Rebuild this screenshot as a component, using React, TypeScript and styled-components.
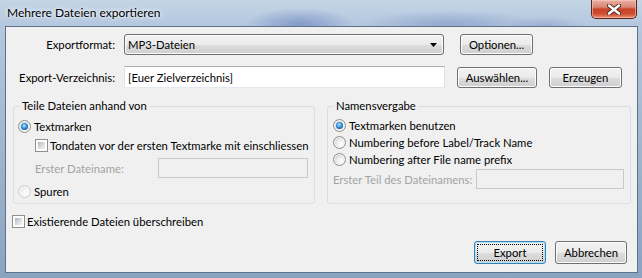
import React from 'react';
import styled, { createGlobalStyle } from 'styled-components';

const Global = createGlobalStyle`
  html, body { margin: 0; padding: 0; }
  body {
    width: 642px; height: 278px; overflow: hidden;
    font-family: Lato, "Noto Sans", sans-serif;
    font-size: 11.3px; color: #000;
  }
  * { box-sizing: border-box; }
`;

const Window = styled.div`
  width: 642px;
  height: 278px;
  display: flex;
  flex-direction: column;
  padding: 0 4px 5px 5px;
  background:
    radial-gradient(ellipse 55px 16px at 300px 24px, rgba(40, 70, 160, 0.35), transparent),
    radial-gradient(ellipse 90px 14px at 450px 24px, rgba(50, 80, 160, 0.25), transparent),
    radial-gradient(ellipse 40px 10px at 545px 26px, rgba(50, 80, 160, 0.2), transparent),
    linear-gradient(180deg, #c5d5e7 0px, #b3c7de 26px, #8aa3c1 100%);
`;

const TitleBar = styled.div`
  height: 26px;
  flex: none;
  display: flex;
  align-items: flex-start;
  justify-content: space-between;
`;

const Title = styled.div`
  margin: 5px 0 0 2px;
  font-size: 12px;
  line-height: 16px;
  color: #000;
  text-shadow: 0 0 6px rgba(255, 255, 255, 0.95), 0 0 3px rgba(255, 255, 255, 0.9);
`;

const CloseButton = styled.div`
  width: 46px;
  height: 19px;
  margin-right: 1px;
  border: 1px solid #5a2318;
  border-top: none;
  border-radius: 0 0 5px 5px;
  background: linear-gradient(180deg, #eab0a2 0%, #d98672 40%, #c7442a 50%, #cf4a2e 75%, #e58e6e 100%);
  box-shadow: inset 0 0 0 1px rgba(255, 210, 200, 0.55);
  display: flex;
  align-items: center;
  justify-content: center;
`;

const Client = styled.div`
  flex: 1;
  background: #f0f0f0;
  border: 1px solid #5e7189;
  display: flex;
  flex-direction: column;
  padding: 7px 6px 0 7px;
`;

const Row = styled.div<{ $top?: number }>`
  display: flex;
  align-items: center;
  margin-top: ${p => p.$top ?? 0}px;
`;

const FieldLabel = styled.label<{ $w: number; $left?: number; $right?: boolean; $disabled?: boolean }>`
  width: ${p => p.$w}px;
  flex: none;
  margin-left: ${p => p.$left ?? 0}px;
  text-align: ${p => (p.$right ? 'right' : 'left')};
  color: ${p => (p.$disabled ? '#a3a3a3' : '#000')};
  white-space: nowrap;
`;

const Select = styled.div`
  width: 320px;
  height: 21px;
  margin-left: 9px;
  border: 1px solid #707070;
  border-radius: 3px;
  background: linear-gradient(180deg, #f2f2f2 0%, #ebebeb 50%, #dddddd 51%, #cfcfcf 100%);
  box-shadow: inset 0 0 0 1px #fbfbfb;
  display: flex;
  align-items: center;
  justify-content: space-between;
  padding: 0 6px 0 3px;
`;

const TextBox = styled.div<{ $w: number; $h: number; $left?: number; $disabled?: boolean }>`
  width: ${p => p.$w}px;
  height: ${p => p.$h}px;
  flex: none;
  margin-left: ${p => p.$left ?? 0}px;
  border: 1px solid;
  border-color: ${p => (p.$disabled ? '#c9c9c9' : '#abadb3 #dbdfe6 #e3e9ef #e2e3ea')};
  background: ${p => (p.$disabled ? '#f0f0f0' : '#fff')};
  display: flex;
  align-items: center;
  padding-left: 3px;
`;

const Button = styled.div<{ $w: number; $h?: number; $left?: number; $default?: boolean }>`
  width: ${p => p.$w}px;
  height: ${p => p.$h ?? 21}px;
  flex: none;
  margin-left: ${p => p.$left ?? 0}px;
  border: 1px solid ${p => (p.$default ? '#3c7fb1' : '#707070')};
  border-radius: 3px;
  background: linear-gradient(180deg, #f2f2f2 0%, #ebebeb 50%, #dddddd 51%, #cfcfcf 100%);
  box-shadow: inset 0 0 0 1px ${p => (p.$default ? '#a9e3fb' : '#fcfcfc')};
  display: flex;
  align-items: center;
  justify-content: center;
  outline: ${p => (p.$default ? '1px dotted #000' : 'none')};
  outline-offset: -4px;
`;

const Groups = styled.div`
  display: flex;
  gap: 12px;
  margin-top: 11px;
`;

const Group = styled.fieldset<{ $w: number; $padTop: number }>`
  width: ${p => p.$w}px;
  height: 105px;
  margin: 0;
  padding: ${p => p.$padTop}px 0 0 0;
  border: 1px solid #d5dfe5;
  border-radius: 3px;
  min-width: 0;
`;

const Legend = styled.legend`
  margin-left: 6px;
  padding: 0 2px;
  line-height: 14px;
`;

const OptionRow = styled.div<{ $top?: number; $indent: number }>`
  display: flex;
  align-items: center;
  height: 16px;
  margin-top: ${p => p.$top ?? 0}px;
  padding-left: ${p => p.$indent}px;
  white-space: nowrap;
`;

const Radio = styled.span<{ $checked?: boolean; $faint?: boolean }>`
  width: 13px;
  height: 13px;
  flex: none;
  margin-right: 3px;
  border-radius: 50%;
  border: 1px solid ${p => (p.$faint ? '#cacaca' : '#8e8f8f')};
  background: ${p =>
    p.$faint
      ? 'radial-gradient(circle at 65% 65%, #fdfdfd 0%, #f0f0f0 50%, #dedede 100%)'
      : 'radial-gradient(circle at 65% 65%, #ffffff 0%, #e9e9e9 45%, #c2c5c9 90%)'};
  box-shadow: inset 0 0 0 1px ${p => (p.$faint ? '#fafafa' : '#f4f4f4')};
  display: flex;
  align-items: center;
  justify-content: center;
  &::after {
    content: '';
    display: ${p => (p.$checked ? 'block' : 'none')};
    width: 7px;
    height: 7px;
    border-radius: 50%;
    background: radial-gradient(circle at 45% 40%, #bfe8ff 0%, #47a3e6 35%, #1b5da3 70%, #0f3766 100%);
  }
`;

const Check = styled.span<{ $left?: number }>`
  width: 13px;
  height: 13px;
  flex: none;
  margin-left: ${p => p.$left ?? 0}px;
  margin-right: 2px;
  border: 1px solid #8e8f8f;
  padding: 2px;
  background: linear-gradient(135deg, #aeb3b9 0%, #dcdee0 55%, #f3f3f3 100%) content-box, #fdfdfd;
`;

const Bottom = styled.div`
  display: flex;
  flex-direction: column;
`;

const ButtonRow = styled.div`
  display: flex;
  justify-content: flex-end;
  gap: 9px;
  margin-top: 12px;
  padding-right: 4px;
`;

const Arrow = () => (
  <svg width="7" height="4" viewBox="0 0 7 4">
    <path d="M0 0 H7 L3.5 4 Z" fill="#000" />
  </svg>
);

const CloseX = () => (
  <svg width="14" height="11" viewBox="0 0 14 11">
    <path d="M2 1.5 L12 9.5 M12 1.5 L2 9.5" stroke="#4a2a25" strokeWidth="4.2" strokeLinecap="round" />
    <path d="M2 1.5 L12 9.5 M12 1.5 L2 9.5" stroke="#ffffff" strokeWidth="2.4" strokeLinecap="round" />
  </svg>
);

export default function App() {
  return (
    <>
      <Global />
      <Window>
        <TitleBar>
          <Title>Mehrere Dateien exportieren</Title>
          <CloseButton>
            <CloseX />
          </CloseButton>
        </TitleBar>
        <Client>
          <Row>
            <FieldLabel $w={102} $right>Exportformat:</FieldLabel>
            <Select>
              <span>MP3-Dateien</span>
              <Arrow />
            </Select>
            <Button $w={73} $left={16}>Optionen...</Button>
          </Row>
          <Row $top={11}>
            <FieldLabel $w={102} $right>Export-Verzeichnis:</FieldLabel>
            <TextBox $w={321} $h={22} $left={9}>[Euer Zielverzeichnis]</TextBox>
            <Button $w={80} $left={12}>Auswählen...</Button>
            <Button $w={73} $left={12}>Erzeugen</Button>
          </Row>
          <Groups>
            <Group $w={303} $padTop={5}>
              <Legend>Teile Dateien anhand von</Legend>
              <OptionRow $indent={4}>
                <Radio $checked />
                Textmarken
              </OptionRow>
              <OptionRow $indent={21} $top={3}>
                <Check />
                Tondaten vor der ersten Textmarke mit einschliessen
              </OptionRow>
              <Row $top={5}>
                <FieldLabel $w={123} $left={21} $disabled>Erster Dateiname:</FieldLabel>
                <TextBox $w={150} $h={20} $disabled />
              </Row>
              <OptionRow $indent={4} $top={5}>
                <Radio $faint />
                Spuren
              </OptionRow>
            </Group>
            <Group $w={305} $padTop={4}>
              <Legend>Namensvergabe</Legend>
              <OptionRow $indent={5}>
                <Radio $checked />
                Textmarken benutzen
              </OptionRow>
              <OptionRow $indent={5} $top={1}>
                <Radio />
                Numbering before Label/Track Name
              </OptionRow>
              <OptionRow $indent={5} $top={1}>
                <Radio />
                Numbering after File name prefix
              </OptionRow>
              <Row $top={2}>
                <FieldLabel $w={143} $left={5} $disabled>Erster Teil des Dateinamens:</FieldLabel>
                <TextBox $w={148} $h={20} $disabled />
              </Row>
            </Group>
          </Groups>
          <Bottom>
            <OptionRow $indent={0} $top={9}>
              <Check $left={-1} />
              Existierende Dateien überschreiben
            </OptionRow>
            <ButtonRow>
              <Button $w={72} $h={23} $default>Export</Button>
              <Button $w={72} $h={23}>Abbrechen</Button>
            </ButtonRow>
          </Bottom>
        </Client>
      </Window>
    </>
  );
}
